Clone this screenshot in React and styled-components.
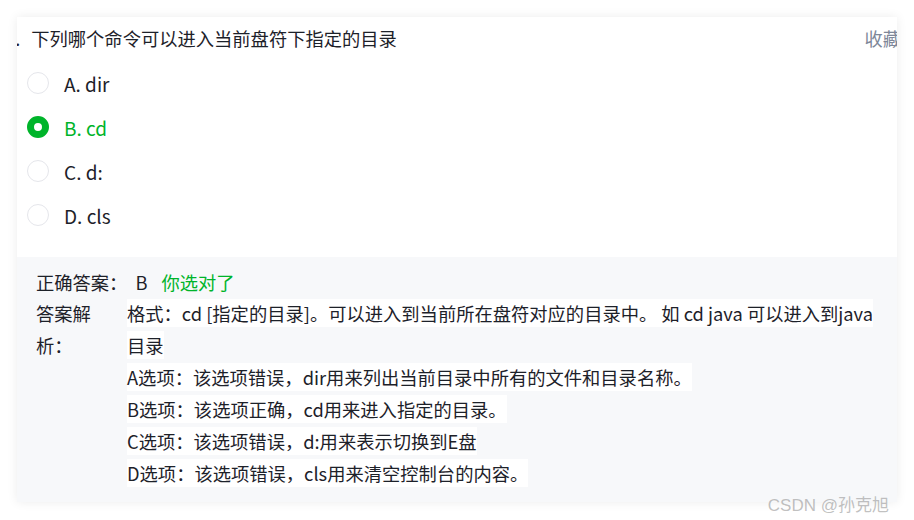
import React from "react";
import styled, { createGlobalStyle } from "styled-components";

const Global = createGlobalStyle`
  body {
    margin: 0;
    background: #fff;
    font-family: "Noto Sans CJK SC", "Noto Sans", sans-serif;
  }
`;

const Page = styled.div`
  position: relative;
  padding: 17px;
  height: 520px;
  box-sizing: border-box;
`;

const Card = styled.div`
  width: 880px;
  background: #fff;
  box-shadow: 0 0 10px rgba(0, 0, 0, 0.08);
  overflow: hidden;
`;

const Question = styled.div`
  padding: 7px 0 20px 0;
`;

const TitleRow = styled.div`
  display: flex;
  justify-content: space-between;
  align-items: center;
  height: 28px;
  margin-bottom: 9px;
`;

const Title = styled.div`
  display: flex;
  font-size: 18.3px;
  color: #1d2129;
  margin-left: -12px;
  white-space: nowrap;
`;

const Num = styled.span`
  margin-right: 11px;
`;

const Collect = styled.div`
  font-size: 18.3px;
  color: #7d8799;
  margin-right: -4px;
`;

const Options = styled.div`
  display: flex;
  flex-direction: column;
  padding-left: 10px;
`;

const Option = styled.div`
  display: flex;
  align-items: center;
  height: 44px;
  gap: 15px;
  font-size: 19px;
  color: ${(p) => (p.$checked ? "#00b42a" : "#1d2129")};
`;

const Radio = styled.span`
  width: 22px;
  height: 22px;
  border-radius: 50%;
  box-sizing: border-box;
  border: ${(p) => (p.$checked ? "7px solid #00b42a" : "1px solid #e5e6eb")};
  background: #fff;
  flex-shrink: 0;
`;

const Analysis = styled.div`
  background: #f7f8fa;
  padding: 11px 19px 13px 19px;
  font-size: 18.3px;
  color: #1d2129;
`;

const AnswerRow = styled.div`
  display: flex;
  align-items: center;
  height: 28px;
`;

const Letter = styled.span`
  margin-left: 8px;
  margin-right: 14px;
`;

const Correct = styled.span`
  color: #00b42a;
`;

const Explain = styled.div`
  display: grid;
  grid-template-columns: 91px 1fr;
  margin-top: 1px;
`;

const ExplainLabel = styled.div`
  width: 64px;
  line-height: 32px;
`;

const Lines = styled.div`
  line-height: 32px;
`;

const Line = styled.div``;

const Mark = styled.span`
  background: #fff;
  padding: 1px 0;
`;

const Watermark = styled.div`
  position: absolute;
  right: 25px;
  bottom: 4px;
  font-size: 17px;
  color: rgba(140, 140, 140, 0.55);
  font-family: "Liberation Sans", "Noto Sans CJK SC", sans-serif;
`;

const options = [
  { key: "A", text: "dir" },
  { key: "B", text: "cd", checked: true },
  { key: "C", text: "d:" },
  { key: "D", text: "cls" },
];

const lines = [
  "格式：cd [指定的目录]。可以进入到当前所在盘符对应的目录中。 如 cd java 可以进入到java目录",
  "A选项：该选项错误，dir用来列出当前目录中所有的文件和目录名称。",
  "B选项：该选项正确，cd用来进入指定的目录。",
  "C选项：该选项错误，d:用来表示切换到E盘",
  "D选项：该选项错误，cls用来清空控制台的内容。",
];

export default function App() {
  return (
    <Page>
      <Global />
      <Card>
        <Question>
          <TitleRow>
            <Title>
              <Num>1.</Num>
              <span>下列哪个命令可以进入当前盘符下指定的目录</span>
            </Title>
            <Collect>收藏</Collect>
          </TitleRow>
          <Options>
            {options.map((o) => (
              <Option key={o.key} $checked={o.checked}>
                <Radio $checked={o.checked} />
                <span>
                  {o.key}. {o.text}
                </span>
              </Option>
            ))}
          </Options>
        </Question>
        <Analysis>
          <AnswerRow>
            <span>正确答案：</span>
            <Letter>B</Letter>
            <Correct>你选对了</Correct>
          </AnswerRow>
          <Explain>
            <ExplainLabel>答案解析：</ExplainLabel>
            <Lines>
              {lines.map((l, i) => (
                <Line key={i}>
                  <Mark>{l}</Mark>
                </Line>
              ))}
            </Lines>
          </Explain>
        </Analysis>
      </Card>
      <Watermark>CSDN @孙克旭</Watermark>
    </Page>
  );
}
